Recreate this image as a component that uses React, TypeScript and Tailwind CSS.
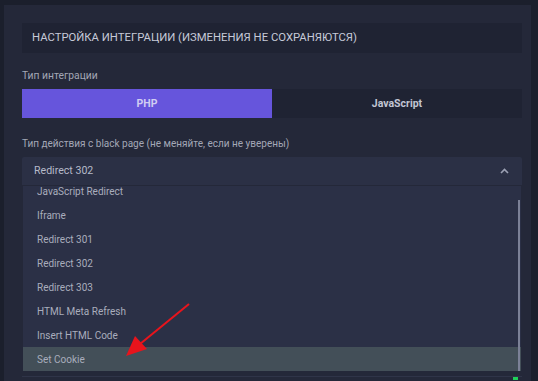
import React from 'react';

const options = [
  'JavaScript Redirect',
  'Iframe',
  'Redirect 301',
  'Redirect 302',
  'Redirect 303',
  'HTML Meta Refresh',
  'Insert HTML Code',
  'Set Cookie',
];

const App = () => {
  const selected = 'Set Cookie';

  return (
    <div
      className="relative h-[381px] w-[538px] overflow-hidden bg-[#1b1f2c] pl-[4px] pt-[5px]"
      style={{ fontFamily: 'Roboto, "Noto Sans", sans-serif' }}
    >
      <div className="h-full w-[527px] bg-[#242839] pl-[18px] pr-[9px] pt-[18px]">
        {/* заголовок */}
        <div className="flex h-[30px] items-center bg-[#1f2333] pl-[10px] text-[11.3px] text-[#c6cad8]">
          НАСТРОЙКА ИНТЕГРАЦИИ (ИЗМЕНЕНИЯ НЕ СОХРАНЯЮТСЯ)
        </div>

        <div className="mt-[16px] h-[14px] text-[10.3px] leading-[14px] text-[#a3a7b6]">
          Тип интеграции
        </div>
        <div className="mt-[6px] flex h-[29px] text-[10.5px] font-bold">
          <button className="flex-1 bg-[#6655dc] text-[#d0cdf2]">PHP</button>
          <button className="flex-1 bg-[#1f2333] text-[#c2c6d4]">JavaScript</button>
        </div>

        <div className="mt-[19px] h-[14px] text-[10px] leading-[14px] text-[#a3a7b6]">
          Тип действия с black page (не меняйте, если не уверены)
        </div>

        {/* select */}
        <div className="mt-[6px] flex h-[28px] items-center justify-between rounded-t-[2px] bg-[#2b3045] pl-[12px] pr-[12px] text-[10.6px] text-[#b6bac9]">
          <span>Redirect 302</span>
          <svg width="9" height="6" viewBox="0 0 9 6" className="mr-[1px]">
            <path d="M1 5 L4.5 1.5 L8 5" stroke="#9ca1b4" strokeWidth="1.6" fill="none" />
          </svg>
        </div>

        {/* выпадающий список */}
        <div className="relative mx-[1px] mt-[1px] h-[185px] overflow-hidden bg-[#2b3046]">
          <div className="-mt-[7px]">
            {options.map((o) => (
              <div
                key={o}
                className={`flex h-[24px] items-center pl-[14px] text-[10px] text-[#a9adbc] ${
                  o === selected ? 'bg-[#434f58]' : ''
                }`}
              >
                {o}
              </div>
            ))}
          </div>
          <div className="absolute bottom-0 right-[1px] top-[14px] w-[2px] bg-[#7c8197]" />
        </div>

        <div className="mt-[5px] flex h-[6px] items-start justify-end border-t border-[#2f3448] pr-[4px]">
          <div className="h-[3px] w-[5px] bg-[#1fd15a]" />
        </div>
      </div>

      {/* стрелка */}
      <svg className="pointer-events-none absolute left-0 top-0" width="538" height="381">
        <line x1="189" y1="304" x2="140" y2="344" stroke="#e8141c" strokeWidth="2" />
        <polygon points="126,356 135,336 147,349" fill="#e8141c" />
      </svg>
    </div>
  );
};

export default App;
